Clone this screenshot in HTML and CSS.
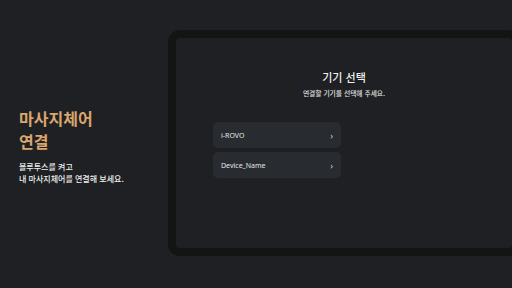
FILE: index.html
```html
<!DOCTYPE html>
<html lang="ko">
<head>
    <meta charset="UTF-8">
    <meta name="viewport" content="width=device-width, initial-scale=1.0">
    <title>기기 선택</title>
    <link rel="stylesheet" href="styles.css">
</head>
<body>
    <div class="page">
        <div class="intro">
            <h1 class="intro-title">마사지체어<br>연결</h1>
            <p class="intro-desc">블루투스를 켜고<br>내 마사지체어를 연결해 보세요.</p>
        </div>

        <div class="tablet">
            <div class="screen">
                <h2 class="screen-title">기기 선택</h2>
                <p class="screen-desc">연결할 기기를 선택해 주세요.</p>

                <div class="device-list">
                    <a href="#" class="device">
                        <span>i-ROVO</span>
                        <span class="chevron">›</span>
                    </a>
                    <a href="#" class="device">
                        <span>Device_Name</span>
                        <span class="chevron">›</span>
                    </a>
                </div>
            </div>
        </div>
    </div>
</body>
</html>
```

FILE: styles.css
```css
html, body {
    margin: 0;
    padding: 0;
    width: 512px;
    height: 288px;
    overflow: hidden;
    background-color: #1e2023;
    font-family: "Noto Sans", "Noto Sans CJK KR", sans-serif;
    color: #e6e6e6;
}

.page {
    display: flex;
    height: 288px;
}

.intro {
    width: 149px;
    flex-shrink: 0;
    padding-left: 19px;
    padding-top: 4px;
    display: flex;
    flex-direction: column;
    justify-content: center;
}

.intro-title {
    margin: 0;
    font-family: "Noto Sans CJK KR", sans-serif;
    font-size: 16px;
    line-height: 23px;
    font-weight: bold;
    color: #d9a66e;
}

.intro-desc {
    margin: 8px 0 0;
    font-family: "Noto Sans CJK KR", sans-serif;
    font-size: 8px;
    line-height: 12px;
    font-weight: 500;
    color: #f0f0f0;
}

.tablet {
    flex-shrink: 0;
    width: 336px;
    height: 210px;
    margin-top: 30px;
    border: 8px solid #131414;
    border-radius: 12px;
    background-color: #1e2023;
}

.screen {
    display: flex;
    flex-direction: column;
    align-items: center;
    padding-top: 32px;
}

.screen-title {
    margin: 0;
    font-family: "Noto Sans CJK KR", sans-serif;
    font-size: 11px;
    line-height: 15px;
    font-weight: 500;
    color: #f0f0f0;
}

.screen-desc {
    margin: 3px 0 0;
    font-family: "Noto Sans CJK KR", sans-serif;
    font-size: 6.75px;
    line-height: 10px;
    font-weight: 500;
    color: #e0e0e0;
}

.device-list {
    align-self: flex-start;
    margin: 24px 0 0 37px;
    display: flex;
    flex-direction: column;
    gap: 4px;
    width: 128px;
}

.device {
    display: flex;
    justify-content: space-between;
    align-items: center;
    height: 26px;
    padding: 0 8px;
    border-radius: 5px;
    background-color: #282b2f;
    color: #e6e6e6;
    font-size: 7px;
    text-decoration: none;
}

.device .chevron {
    font-size: 9px;
    color: #cfcfcf;
}
```
